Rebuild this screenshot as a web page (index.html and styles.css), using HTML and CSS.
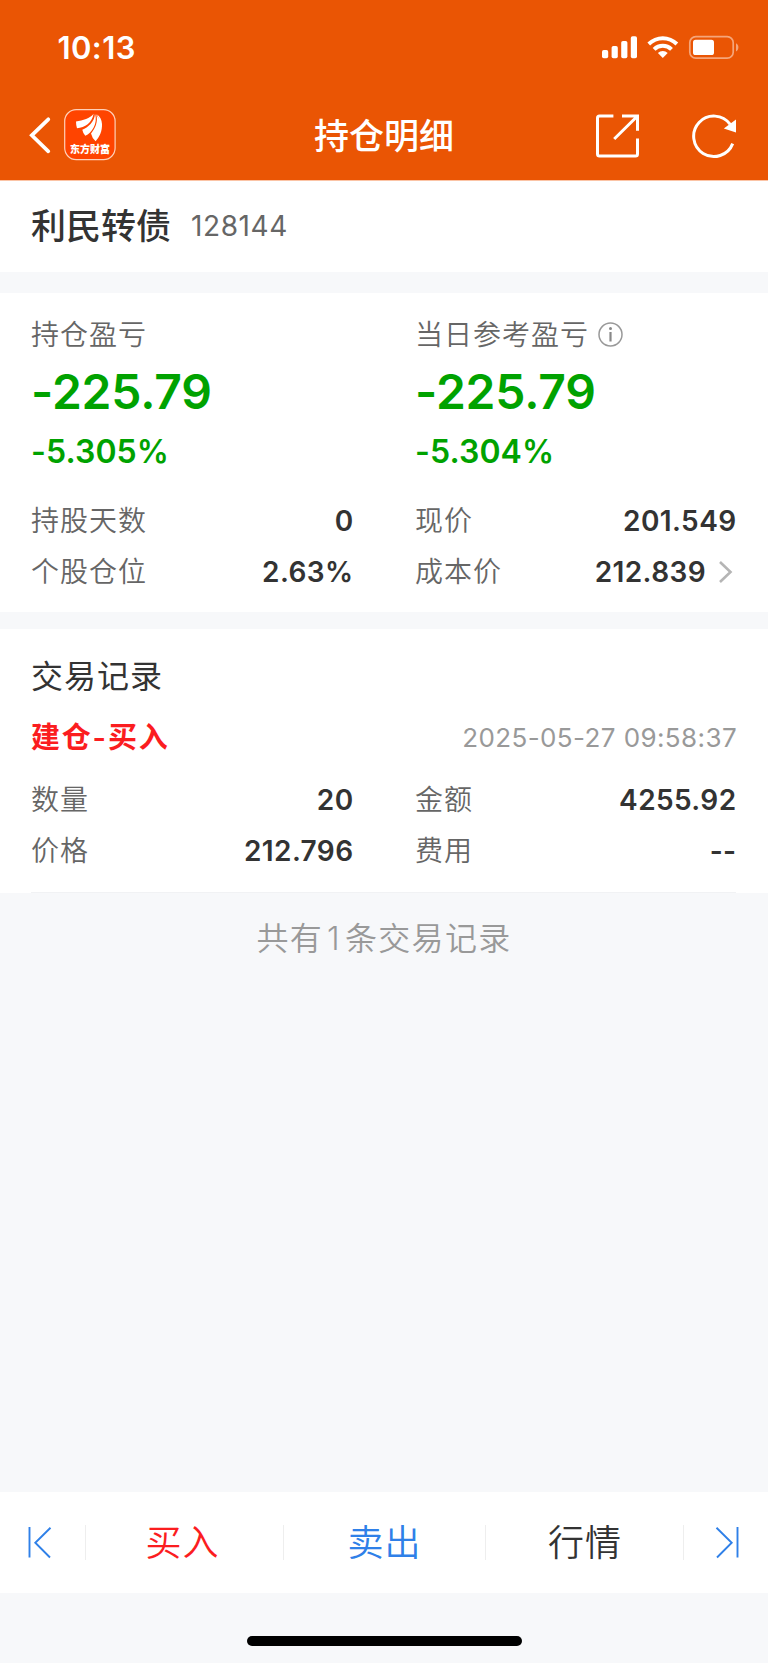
FILE: index.html
```html
<!DOCTYPE html>
<html lang="zh-CN">
<head>
<meta charset="utf-8">
<title>持仓明细</title>
<link rel="stylesheet" href="styles.css">
</head>
<body>
<div class="screen">
  <header class="header">
    <div class="status">
      <span class="time">10:13</span>
      <svg class="status-icons" viewBox="600 32 142 30" width="142" height="30">
        <g fill="#fff">
          <rect x="602" y="50" width="6.2" height="8.2" rx="1.8"/>
          <rect x="611.6" y="46" width="6.2" height="12.2" rx="1.8"/>
          <rect x="621.2" y="41" width="6.2" height="17.2" rx="1.8"/>
          <rect x="630.8" y="36.2" width="6.2" height="22" rx="1.8"/>
          <path d="M647.4 42.6a22 22 0 0 1 30.8 0l-2.7 2.8a18.1 18.1 0 0 0-25.4 0z"/>
          <path d="M652.7 47.9a14.4 14.4 0 0 1 20.2 0l-2.8 2.8a10.4 10.4 0 0 0-14.6 0z"/>
          <path d="M657.9 53.1a7 7 0 0 1 9.8 0l-4.9 5z"/>
          <rect x="693" y="39.8" width="21" height="15.2" rx="2.6"/>
        </g>
        <rect x="689.8" y="36.6" width="43.4" height="21.6" rx="6" fill="none" stroke="#f5a57a" stroke-width="1.7"/>
        <path d="M736 43.2c3.2 1.4 3.2 6.8 0 8.2z" fill="#f5a57a"/>
      </svg>
    </div>
    <div class="nav">
      <div class="nav-left">
        <svg class="back" viewBox="28 114 26 42" width="26" height="42"><path d="M48.3 119.3L31.8 135.3L48.3 151.3" fill="none" stroke="#fff" stroke-width="3.7" stroke-linecap="round" stroke-linejoin="miter"/></svg>
        <svg class="logo" viewBox="64 109 52 52" width="52" height="52">
          <rect x="64.7" y="109.6" width="50.4" height="50" rx="11.5" fill="#ff4400" stroke="#ffd0b8" stroke-width="1.2"/>
          <g fill="#fff">
            <path d="M93.6 113.8C90 118.5 83 120.5 76 121.5Q76 125.5 77 128.2C85 127.5 92 123 93.6 113.8z"/>
            <path d="M95 113.8C94.5 122 88 127.5 82.3 129.8Q83 133.5 85.3 135.8C92 133 98 123.5 95 113.8z"/>
            <path d="M96.2 114C98.5 122 95 128.5 91 133.5Q92 138 95.6 141.2C99.5 137 102.3 131 102 124C101.8 119.5 99.8 116.2 97.2 114.4L98.8 119z"/>
          </g>
          <text x="89.9" y="153.4" text-anchor="middle" class="logo-text">东方财富</text>
        </svg>
      </div>
      <h1 class="title">持仓明细</h1>
      <div class="nav-right">
        <svg viewBox="595 112.5 46 46" width="46" height="46" fill="none" stroke="#fff" stroke-width="3">
          <path d="M613.4 116.5H599.5Q597.5 116.5 597.5 118.5V154.5Q597.5 156.5 599.5 156.5H635.5Q637.500 156.500 637.500 154.500V139"/>
          <path d="M622 116.500H637.500V131.200M637 117L614.200 139.500"/>
        </svg>
        <svg viewBox="690 111 48 48" width="48" height="48">
          <path d="M730.2 124.4A20.2 20.2 0 1 0 732.7 143.6" fill="none" stroke="#fff" stroke-width="3"/>
          <path d="M736 119.6V132.6L723.8 128.5z" fill="#fff"/>
        </svg>
      </div>
    </div>
  </header>

  <section class="stock">
    <span class="stock-name">利民转债</span><span class="stock-code">128144</span>
  </section>

  <section class="summary">
    <div class="col">
      <div class="label">持仓盈亏</div>
      <div class="amount">-225.79</div>
      <div class="percent">-5.305%</div>
      <div class="row"><span class="label">持股天数</span><span class="value">0</span></div>
      <div class="row"><span class="label">个股仓位</span><span class="value">2.63%</span></div>
    </div>
    <div class="col">
      <div class="label with-icon">当日参考盈亏
        <svg viewBox="0 0 26 26" width="26" height="26"><circle cx="13.5" cy="12.5" r="11.5" fill="none" stroke="#999" stroke-width="1.5"/><circle cx="13.5" cy="6.5" r="1.5" fill="#888"/><path d="M13.5 10V19.5" stroke="#888" stroke-width="2.2"/></svg>
      </div>
      <div class="amount">-225.79</div>
      <div class="percent">-5.304%</div>
      <div class="row"><span class="label">现价</span><span class="value">201.549</span></div>
      <div class="row"><span class="label">成本价</span><span class="value">212.839<svg class="more" viewBox="0 0 16 24" width="16" height="24"><path d="M2 2L12.5 12L2 22" fill="none" stroke="#b5b5b5" stroke-width="2.6"/></svg></span></div>
    </div>
  </section>

  <section class="records">
    <h2 class="records-title">交易记录</h2>
    <div class="record-head"><span class="record-type">建仓-买入</span><span class="record-time">2025-05-27 09:58:37</span></div>
    <div class="record-grid">
      <div class="row"><span class="label">数量</span><span class="value">20</span></div>
      <div class="row"><span class="label">金额</span><span class="value">4255.92</span></div>
      <div class="row"><span class="label">价格</span><span class="value">212.796</span></div>
      <div class="row"><span class="label">费用</span><span class="value">--</span></div>
    </div>
  </section>

  <p class="total">共有<span class="count">1</span>条交易记录</p>

  <nav class="tabs">
    <span class="tab-end"><svg viewBox="0 0.5 24 32" width="24" height="32"><path d="M1.5 0.5V31M22.5 1.2L7.3 16.2L22 31" fill="none" stroke="#2f80e8" stroke-width="1.9"/></svg></span>
    <span class="tab buy">买入</span>
    <span class="tab sell">卖出</span>
    <span class="tab quote">行情</span>
    <span class="tab-end last"><svg viewBox="0 0.5 24 32" width="24" height="32"><path d="M22.5 0.5V31M1.5 1.2L16.7 16.2L2 31" fill="none" stroke="#2f80e8" stroke-width="1.9"/></svg></span>
  </nav>
  <div class="home"><span class="home-bar"></span></div>
</div>
</body>
</html>
```
FILE: styles.css
```css
* { box-sizing: border-box; }
body {
  margin: 0;
  background: #f7f8fa;
  font-family: Inter, "Noto Sans CJK SC", sans-serif;
  color: #333;
}
.screen {
  width: 768px;
  height: 1663px;
  display: flex;
  flex-direction: column;
}
.screen > * { flex: none; }
h1, h2, p { margin: 0; font-weight: 400; }
svg { display: block; flex: none; }

.header { height: 181px; background: #ea5504; border-bottom: 1px solid #fbc4a6; color: #fff; }
.status { height: 90px; display: flex; justify-content: space-between; padding: 32px 26px 0 57.5px; }
.time { font-size: 31px; font-weight: 600; line-height: 31px; letter-spacing: 0.4px; }
.nav { height: 90px; display: grid; grid-template-columns: 1fr auto 1fr; align-items: center; padding: 0 28px; }
.nav-left { display: flex; align-items: center; gap: 10px; }
.logo-text { font: 900 10px "Noto Sans CJK SC", sans-serif; fill: #fff; }
.title { font-size: 35px; font-weight: 500; line-height: 50px; padding-top: 2px; }
.nav-right { display: flex; align-items: center; justify-content: flex-end; gap: 49px; padding-right: 2px; }

.stock { height: 91px; background: #fff; padding: 20px 31px 0; display: flex; line-height: 50px; margin-bottom: 21px; }
.stock-name { font-size: 35px; font-weight: 500; width: 160px; }
.stock-code { font-size: 28px; color: #666; letter-spacing: 0.6px; }

.summary { height: 319px; background: #fff; padding: 22px 32px 0 31px; display: grid; grid-template-columns: 322px 321px; column-gap: 62px; margin-bottom: 17px; }
.label { font-size: 28px; line-height: 40px; letter-spacing: 1px; color: #666; font-weight: 350; }
.with-icon { display: flex; align-items: center; gap: 8px; }
.amount { font-size: 48px; font-weight: 600; line-height: 60px; letter-spacing: -0.2px; margin-top: 7px; color: #00a200; }
.percent { font-size: 32px; font-weight: 600; line-height: 40px; letter-spacing: 0.1px; margin-top: 10px; margin-bottom: 23px; color: #00a200; }
.row { display: flex; align-items: center; justify-content: space-between; height: 51.3px; }
.value { display: flex; align-items: center; font-size: 28px; font-weight: 600; line-height: 40px; letter-spacing: 0.4px; margin-right: -0.5px; }
.more { margin-left: 12px; margin-right: 2.5px; }

.records { height: 264px; background: #fff; padding: 23px 32px 0 31px; }
.records-title { font-size: 32px; line-height: 50px; letter-spacing: 1px; }
.record-head { display: flex; justify-content: space-between; line-height: 50px; margin-top: 11px; }
.record-type { font-size: 29px; font-weight: 600; color: #fb1d1f; letter-spacing: 1.8px; }
.record-time { font-size: 26px; color: #999; letter-spacing: 0.4px; margin-right: -1px; }
.record-grid { display: grid; grid-template-columns: 322px 321px; column-gap: 62px; margin-top: 11px; height: 119px; align-content: start; border-bottom: 1px solid #f1f2f4; }

.total { margin: 21px 0 auto; text-align: center; font-size: 32px; line-height: 50px; letter-spacing: 1.3px; color: #999; font-weight: 350; }
.count { margin: 0 4px; }

.tabs { height: 101px; background: #fff; display: grid; grid-template-columns: 86px 198px 202px 198px 84px; align-items: center; }
.tabs > * { height: 35px; display: flex; align-items: center; justify-content: center; border-right: 1px solid #eee; }
.tabs > .last { border: 0; padding-left: 6px; }
.tab-end { padding-right: 5px; }
.tab { font-size: 36px; letter-spacing: 1px; font-weight: 350; line-height: 50px; }
.tabs > .buy { color: #fb1d1f; padding-right: 4px; }
.sell { color: #2f80e8; }
.tabs > .quote { padding-left: 1px; }
.home { height: 70px; display: flex; justify-content: center; padding-top: 43px; }
.home-bar { width: 275px; height: 10px; border-radius: 5px; background: #000; }
```
